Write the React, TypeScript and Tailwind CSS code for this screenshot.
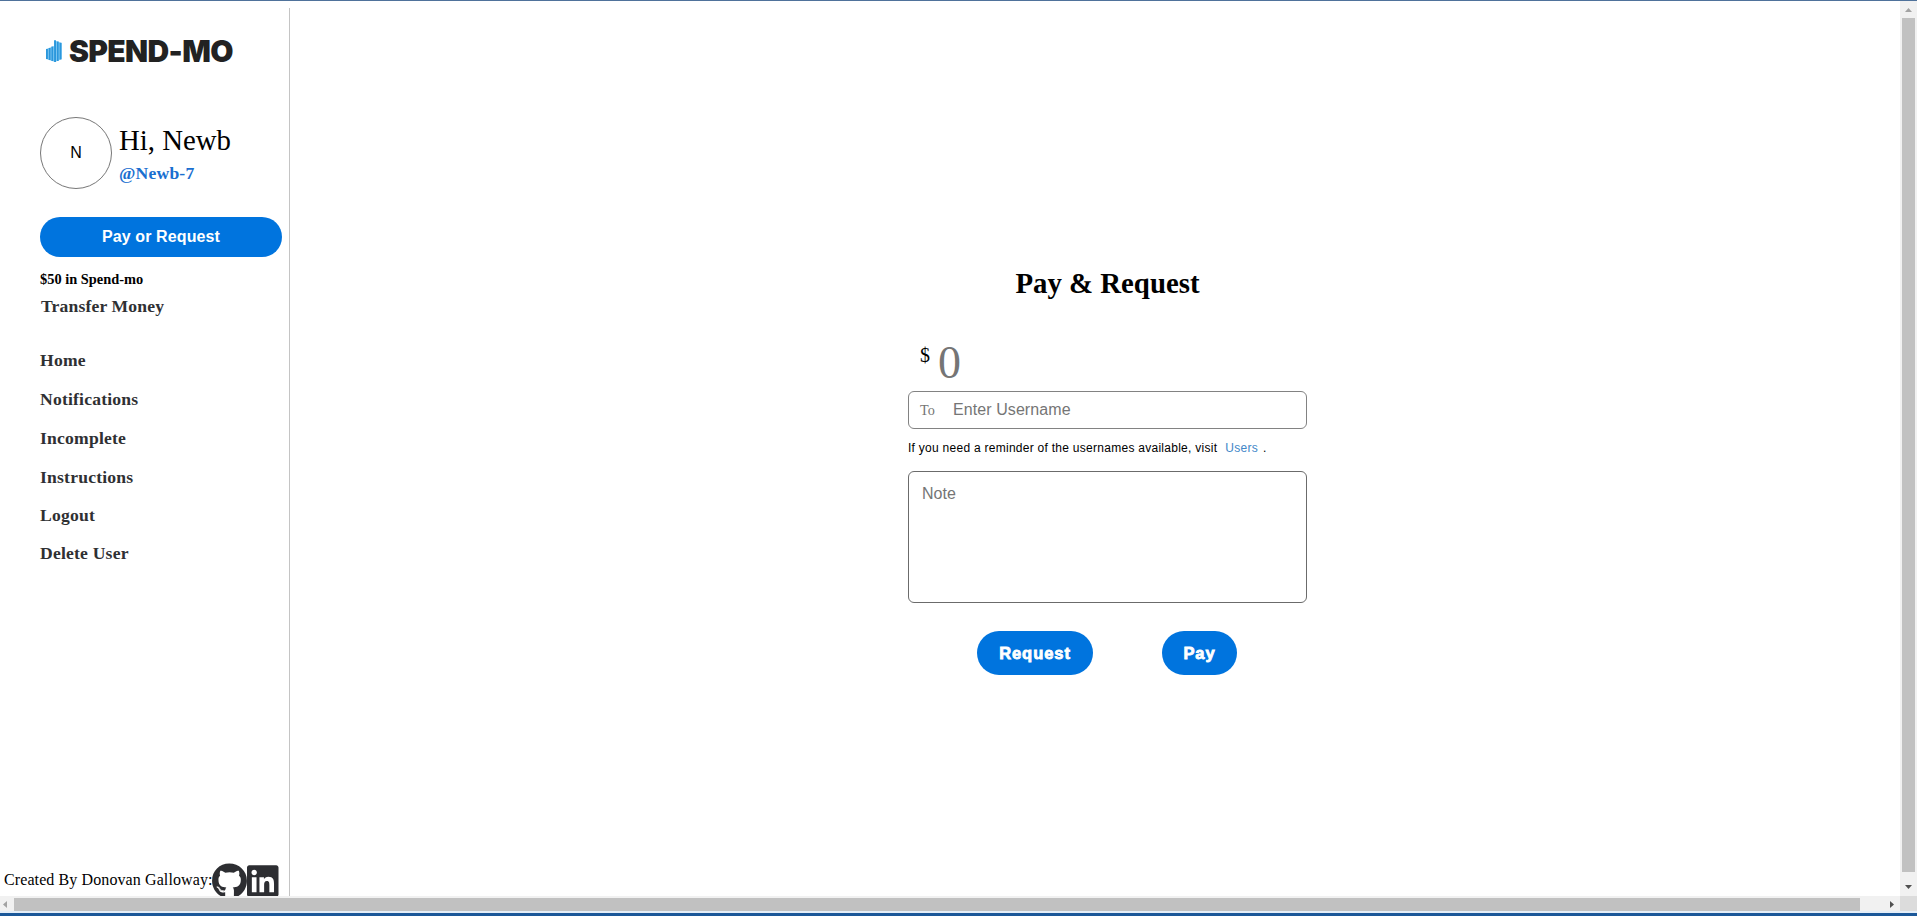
import React from "react";
import { FaGithub, FaLinkedin } from "react-icons/fa";

const navItems = [
  { label: "Home", gap: "mt-[34px]" },
  { label: "Notifications", gap: "mt-[19px]" },
  { label: "Incomplete", gap: "mt-[19px]" },
  { label: "Instructions", gap: "mt-[19px]" },
  { label: "Logout", gap: "mt-[18px]" },
  { label: "Delete User", gap: "mt-[18px]" },
];

function LogoMark() {
  const bars = [
    { x: 0, y: 9, h: 10 },
    { x: 2.7, y: 8, h: 12 },
    { x: 5.4, y: 6.5, h: 14.5 },
    { x: 8.1, y: 0.3, h: 21.7 },
    { x: 10.8, y: 1.5, h: 19.5 },
    { x: 13.5, y: 2.8, h: 16.7 },
  ];
  return (
    <svg className="ml-1.5 h-[22px] w-4 shrink-0" viewBox="0 0 16 22">
      <path d="M0 9L8.1 6V0.3L16 3V19L9 22L0 19z" fill="#8fd0f5" />
      {bars.map((b) => (
        <rect key={b.x} x={b.x} y={b.y} width="1.9" height={b.h} fill="#2b97dc" />
      ))}
    </svg>
  );
}

function Sidebar() {
  return (
    <aside className="mt-[7px] flex w-[290px] shrink-0 flex-col border-r border-[#c4c4c4]">
      <div className="ml-10 mt-7 flex h-[30px] items-center">
        <LogoMark />
        <span className="ml-[7px] whitespace-nowrap font-['Inter'] text-[30px] leading-[30px] font-black tracking-[-0.65px] text-[#222]">
          SPEND-MO
        </span>
      </div>
      <div className="ml-10 mt-[51px] flex h-[72px]">
        <div className="flex size-[72px] items-center justify-center rounded-full border border-[#777] font-['Liberation_Sans'] text-base">
          N
        </div>
        <div className="ml-[7px] flex flex-col pt-1.5">
          <span className="text-[28.8px] leading-[34px]">Hi, Newb</span>
          <span className="mt-1.5 text-[17.6px] leading-5 font-bold tracking-[0.2px] text-[#1a6fd0]">@Newb-7</span>
        </div>
      </div>
      <button className="ml-10 mt-7 h-10 w-[242px] rounded-full bg-[#0074de] font-['Liberation_Sans'] text-base font-bold tracking-[0.12px] text-white">
        Pay or Request
      </button>
      <p className="ml-10 mt-[13px] text-[14.4px] leading-[18px] font-bold">$50 in Spend-mo</p>
      <a className="ml-10 mt-2 pl-px text-[17.6px] leading-5 font-bold tracking-[0.15px] text-[#2f3033]">
        Transfer Money
      </a>
      <nav className="ml-10 flex flex-col text-[17.6px] leading-5 font-bold tracking-[0.2px] text-[#2f3033]">
        {navItems.map((n) => (
          <a key={n.label} className={n.gap}>
            {n.label}
          </a>
        ))}
      </nav>
      <footer className="mt-auto flex h-[33px] items-start overflow-hidden pl-1">
        <span className="w-52 whitespace-nowrap pt-[7px] text-base leading-5 tracking-[0.1px]">
          Created By Donovan Galloway:
        </span>
        <FaGithub className="h-9 w-[35px] shrink-0 text-[#2d2e32]" />
        <FaLinkedin className="h-9 w-[31.5px] shrink-0 text-[#2d2e32]" />
      </footer>
    </aside>
  );
}

function PayForm() {
  return (
    <form className="ml-[618px] mt-[265px] flex w-[399px] flex-col">
      <h1 className="text-center text-[28.8px] leading-[34px] font-bold">Pay &amp; Request</h1>
      <div className="mt-[34px] flex h-14 items-start pl-3">
        <span className="pt-[9px] text-[20px] leading-6">$</span>
        <input
          className="ml-[8px] mt-px h-14 w-40 text-[46px] leading-[56px] outline-none placeholder:text-[#757575]"
          placeholder="0"
        />
      </div>
      <div className="mt-px flex h-[38px] items-center rounded-md border border-[#828282] pl-[11px]">
        <label className="w-[33px] text-[14.2px] leading-4 text-[#757575]">To</label>
        <input
          className="h-9 w-72 font-['Liberation_Sans'] text-base tracking-[0.08px] outline-none placeholder:text-[#757575]"
          placeholder="Enter Username"
        />
      </div>
      <p className="mt-[11px] flex font-['Liberation_Sans'] text-xs leading-4 tracking-[0.27px]">
        <span className="whitespace-nowrap">If you need a reminder of the usernames available, visit</span>
        <a className="ml-2 text-[#4287c8]">Users</a>
        <span className="ml-[5px]">.</span>
      </p>
      <textarea
        className="mt-[15px] h-[132px] resize-none rounded-md border border-[#6b6b6b] px-[13px] py-3 font-['Liberation_Sans'] text-base leading-5 outline-none placeholder:text-[#757575]"
        placeholder="Note"
      />
      <div className="mt-7 flex h-11 pl-[69px] font-['Liberation_Sans'] text-[16.5px] font-bold tracking-[0.95px] text-white">
        <button type="button" className="w-[116px] rounded-[22px] bg-[#0074de] [-webkit-text-stroke:0.8px_white]">
          Request
        </button>
        <button type="button" className="ml-[69px] w-[75px] rounded-[22px] bg-[#0074de] [-webkit-text-stroke:0.8px_white]">
          Pay
        </button>
      </div>
    </form>
  );
}

function VerticalScrollbar() {
  return (
    <div className="flex w-[17px] shrink-0 flex-col items-center bg-[#f1f1f1]">
      <svg className="h-[17px] w-[17px]" viewBox="0 0 17 17">
        <path d="M5 11h7L8.5 7z" fill="#a3a3a3" />
      </svg>
      <div className="h-[854px] w-[13px] bg-[#c1c1c1]" />
      <svg className="mt-[6px] h-[17px] w-[17px]" viewBox="0 0 17 17">
        <path d="M5 7h7L8.5 11z" fill="#505050" />
      </svg>
    </div>
  );
}

function HorizontalScrollbar() {
  return (
    <div className="flex h-[15px] bg-[#f1f1f1]">
      <svg className="h-[15px] w-3.5" viewBox="0 0 14 15">
        <path d="M7 5v7L3 8.5z" fill="#a3a3a3" />
      </svg>
      <div className="mt-0.5 h-[13px] w-[1846px] bg-[#c1c1c1]" />
      <svg className="ml-[23px] h-[15px] w-[17px]" viewBox="0 0 17 15">
        <path d="M7 5v7L11 8.5z" fill="#505050" />
      </svg>
      <div className="ml-auto w-[17px] bg-[#dcdcdc]" />
    </div>
  );
}

export default function App() {
  return (
    <div className="flex h-[916px] w-[1917px] flex-col overflow-hidden border-t border-[#4f729b] bg-white font-['Liberation_Serif',serif] text-black">
      <div className="flex h-[895px]">
        <Sidebar />
        <main className="flex-1">
          <PayForm />
        </main>
        <VerticalScrollbar />
      </div>
      <HorizontalScrollbar />
      <div className="h-0.5 bg-[#e4eef8]" />
      <div className="h-[3px] bg-[#1b5899]" />
    </div>
  );
}
